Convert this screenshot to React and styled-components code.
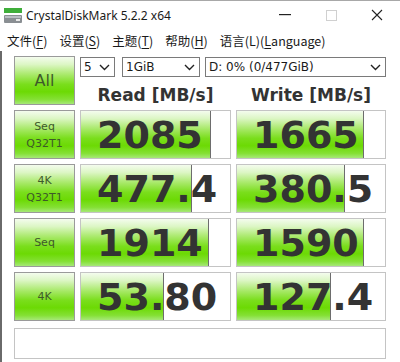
import React from 'react';
import styled, { createGlobalStyle } from 'styled-components';

const GlobalStyle = createGlobalStyle`
  html, body { margin: 0; padding: 0; background: #ffffff; }
  body { width: 400px; height: 362px; overflow: hidden; }
`;

const Window = styled.div`
  width: 400px;
  height: 362px;
  box-sizing: border-box;
  background: #ffffff;
  border-top: 1px solid #a8a8a8;
  display: flex;
  flex-direction: column;
  font-family: "DejaVu Sans", Verdana, sans-serif;
`;

const TitleBar = styled.div`
  height: 28px;
  display: flex;
  align-items: center;
  padding-left: 4px;
`;

const TitleText = styled.span`
  margin-left: 4px;
  font-family: "Noto Sans", "Open Sans", sans-serif;
  font-size: 12px;
  color: #1a1a1a;
  flex: 1;
`;

const Caption = styled.div`
  width: 46px;
  height: 28px;
  display: flex;
  align-items: center;
  justify-content: center;
`;

const MenuBar = styled.div`
  height: 22px;
  display: flex;
  align-items: center;
  padding-left: 7px;
  gap: 12px;
  font-family: "Noto Sans CJK SC", "Noto Sans", sans-serif;
  font-size: 12.5px;
  color: #1a1a1a;
`;

const MenuItem = styled.span`
  u { text-decoration: underline; text-underline-offset: 2px; }
`;

const Body = styled.div`
  flex: 1;
  border-left: 2px solid #6a6a6a;
  padding: 5px 0 0 12px;
  display: flex;
  flex-direction: column;
  gap: 5px;
`;

const Row = styled.div`
  display: grid;
  grid-template-columns: 61px 151px 150px;
  column-gap: 5px;
  height: 49px;
`;

const greenGradient = `linear-gradient(to bottom,
  #f4fcee 0%, #dcf6c4 16%, #acea70 36%, #7ade1c 58%, #6cda04 74%, #84e034 90%, #a6e878 100%)`;

const LabelButton = styled.div`
  box-sizing: border-box;
  border: 1px solid #9a9a9a;
  background: ${greenGradient};
  color: #3e5a2a;
  display: flex;
  flex-direction: column;
  align-items: center;
  justify-content: center;
  font-family: "DejaVu Sans", Verdana, sans-serif;
  font-size: ${p => (p.$big ? '16px' : '11px')};
  line-height: 17px;
`;

const HeaderArea = styled.div`
  grid-column: 2 / 4;
  display: flex;
  flex-direction: column;
`;

const SelectRow = styled.div`
  display: flex;
  height: 20px;
  margin-top: 1px;
`;

const Select = styled.div`
  box-sizing: border-box;
  width: ${p => p.$w}px;
  margin-left: ${p => p.$ml || 0}px;
  height: 20px;
  border: 1px solid #7a7a7a;
  display: flex;
  align-items: center;
  padding: 0 4px 0 3px;
  font-size: 12px;
  color: #1a1a1a;
  background: #fff;
`;

const SelectText = styled.span`
  flex: 1;
  white-space: nowrap;
`;

const HeaderTexts = styled.div`
  display: grid;
  grid-template-columns: 151px 150px;
  column-gap: 5px;
  margin-top: 8px;
`;

const HeaderText = styled.div`
  text-align: center;
  font-weight: bold;
  font-size: 17px;
  color: #333;
  line-height: 20px;
`;

const Cell = styled.div`
  position: relative;
  box-sizing: border-box;
  border: 1px solid #c4c4c4;
  background: #fff;
  overflow: hidden;
`;

const Fill = styled.div`
  position: absolute;
  left: 0;
  top: 0;
  bottom: 0;
  background: ${greenGradient};
  border-right: 1px solid #6d6d6d;
`;

const Value = styled.div`
  position: relative;
  height: 100%;
  display: flex;
  align-items: center;
  padding-left: 16px;
  font-weight: bold;
  font-size: 38px;
  color: #333333;
`;

const Comment = styled.div`
  box-sizing: border-box;
  margin-top: 2px;
  width: 372px;
  height: 31px;
  border: 1px solid #c4c4c4;
  background: #fff;
`;

const Chevron = () => (
  <svg width="11" height="7" viewBox="0 0 11 7">
    <path d="M1 1 L5.5 5.5 L10 1" fill="none" stroke="#222" strokeWidth="1.4" />
  </svg>
);

const DriveIcon = () => (
  <svg width="18" height="15" viewBox="0 0 18 15">
    <rect x="0" y="0" width="18" height="5" fill="#3fae3a" />
    <rect x="0" y="7" width="18" height="8" rx="1" fill="#8a8f93" />
    <rect x="1" y="8" width="16" height="2" fill="#b9bec2" />
    <rect x="12" y="11" width="4" height="2" fill="#e8e8e8" />
  </svg>
);

const rows = [
  { label: ['Seq', 'Q32T1'], read: '2085', readFill: 129, write: '1665', writeFill: 126 },
  { label: ['4K', 'Q32T1'], read: '477.4', readFill: 110, write: '380.5', writeFill: 107 },
  { label: ['Seq'], read: '1914', readFill: 127, write: '1590', writeFill: 126 },
  { label: ['4K'], read: '53.80', readFill: 82, write: '127.4', writeFill: 93 },
];

export default function App() {
  return (
    <>
      <GlobalStyle />
      <Window>
        <TitleBar>
          <DriveIcon />
          <TitleText>CrystalDiskMark 5.2.2 x64</TitleText>
          <Caption>
            <svg width="12" height="2" viewBox="0 0 12 2"><rect width="12" height="1.2" fill="#222" /></svg>
          </Caption>
          <Caption>
            <svg width="11" height="11" viewBox="0 0 11 11"><rect x="0.5" y="0.5" width="10" height="10" fill="none" stroke="#d0d0d0" /></svg>
          </Caption>
          <Caption>
            <svg width="12" height="12" viewBox="0 0 12 12"><path d="M1 1 L11 11 M11 1 L1 11" stroke="#222" strokeWidth="1.1" /></svg>
          </Caption>
        </TitleBar>
        <MenuBar>
          <MenuItem>文件(<u>F</u>)</MenuItem>
          <MenuItem>设置(<u>S</u>)</MenuItem>
          <MenuItem>主题(<u>T</u>)</MenuItem>
          <MenuItem>帮助(<u>H</u>)</MenuItem>
          <MenuItem>语言(L)(<u>L</u>anguage)</MenuItem>
        </MenuBar>
        <Body>
          <Row>
            <LabelButton $big>All</LabelButton>
            <HeaderArea>
              <SelectRow>
                <Select $w={35}><SelectText>5</SelectText><Chevron /></Select>
                <Select $w={78} $ml={7}><SelectText>1GiB</SelectText><Chevron /></Select>
                <Select $w={181} $ml={5}><SelectText>D: 0% (0/477GiB)</SelectText><Chevron /></Select>
              </SelectRow>
              <HeaderTexts>
                <HeaderText>Read [MB/s]</HeaderText>
                <HeaderText>Write [MB/s]</HeaderText>
              </HeaderTexts>
            </HeaderArea>
          </Row>
          {rows.map((r, i) => (
            <Row key={i}>
              <LabelButton>
                {r.label.map(l => <span key={l}>{l}</span>)}
              </LabelButton>
              <Cell>
                <Fill style={{ width: r.readFill }} />
                <Value>{r.read}</Value>
              </Cell>
              <Cell>
                <Fill style={{ width: r.writeFill }} />
                <Value>{r.write}</Value>
              </Cell>
            </Row>
          ))}
          <Comment />
        </Body>
      </Window>
    </>
  );
}
